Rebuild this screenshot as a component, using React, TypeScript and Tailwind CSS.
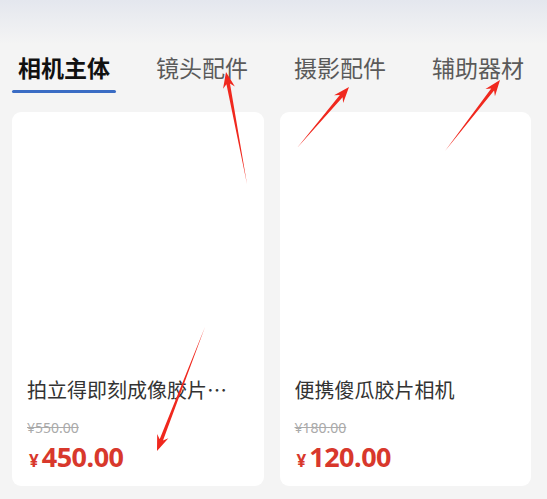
import React from 'react';

type Pt = [number, number];

// tapering red annotation arrow, tail -> tip
function arrowPoints(tail: Pt, tip: Pt) {
  const dx = tip[0] - tail[0];
  const dy = tip[1] - tail[1];
  const len = Math.hypot(dx, dy);
  const ux = dx / len;
  const uy = dy / len;
  const nx = -uy;
  const ny = ux;
  const headLen = 16;
  const headW = 6;
  const shaftW = 1.8;
  const base: Pt = [tip[0] - ux * headLen, tip[1] - uy * headLen];
  const notch: Pt = [tip[0] - ux * (headLen - 4), tip[1] - uy * (headLen - 4)];
  const pts: Pt[] = [
    tail,
    [notch[0] + nx * shaftW, notch[1] + ny * shaftW],
    [base[0] + nx * headW, base[1] + ny * headW],
    tip,
    [base[0] - nx * headW, base[1] - ny * headW],
    [notch[0] - nx * shaftW, notch[1] - ny * shaftW],
  ];
  return pts.map((p) => p.join(',')).join(' ');
}

const arrows: { tail: Pt; tip: Pt }[] = [
  { tail: [247, 184], tip: [226, 72] },
  { tail: [297, 148], tip: [349, 87] },
  { tail: [445, 151], tip: [500, 80] },
  { tail: [205, 327], tip: [157, 451] },
];

const tabs = ['相机主体', '镜头配件', '摄影配件', '辅助器材'];

const products = [
  { title: '拍立得即刻成像胶片…', original: '¥550.00', price: '450.00' },
  { title: '便携傻瓜胶片相机', original: '¥180.00', price: '120.00' },
];

export default function App() {
  return (
    <div
      className="relative w-[547px] h-[499px] overflow-hidden bg-[#f4f4f4]"
      style={{ fontFamily: '"Noto Sans CJK SC", "Noto Sans", sans-serif' }}
    >
      <div className="absolute inset-x-0 top-0 h-[44px] bg-gradient-to-b from-[#e4e7ee] to-[#f4f4f4]" />

      <div className="relative flex pt-[51px] pl-[12px] whitespace-nowrap">
        {tabs.map((t, i) => (
          <div key={t} className={i === 0 ? 'shrink-0 w-[104px] mr-[40px]' : 'shrink-0 w-[92px] mr-[46px]'}>
            <div
              className={
                i === 0
                  ? 'pl-[6px] text-[23px] leading-[32px] font-bold text-[#111]'
                  : 'text-[23px] leading-[32px] text-[#5a5a5a]'
              }
            >
              {t}
            </div>
            {i === 0 && <div className="mt-[7px] h-[3px] rounded-full bg-[#3a6cc4]" />}
          </div>
        ))}
      </div>

      <div className="relative grid grid-cols-2 gap-4 pl-[12px] pr-[16px] mt-[19px]">
        {products.map((p) => (
          <div key={p.title} className="h-[374px] rounded-[9px] bg-white flex flex-col justify-end pl-[15px] pb-[12px]">
            <div className="text-[20px] leading-[28px] text-[#333] whitespace-nowrap">{p.title}</div>
            <div
              className="mt-[15px] text-[14px] leading-[18px] text-[#aaaaaa] line-through"
              style={{ fontFamily: '"Noto Sans", sans-serif' }}
            >
              {p.original}
            </div>
            <div
              className="mt-[3px] flex items-baseline text-[#d8382c] font-bold"
              style={{ fontFamily: '"Noto Sans", sans-serif' }}
            >
              <span className="text-[17px] ml-[2px] mr-[3px]">¥</span>
              <span className="text-[27px] leading-[34px] tracking-[-0.5px]">{p.price}</span>
            </div>
          </div>
        ))}
      </div>

      <svg className="absolute inset-0 pointer-events-none" width="547" height="499">
        {arrows.map((a, i) => (
          <polygon key={i} points={arrowPoints(a.tail, a.tip)} fill="#f0281e" />
        ))}
      </svg>
    </div>
  );
}
